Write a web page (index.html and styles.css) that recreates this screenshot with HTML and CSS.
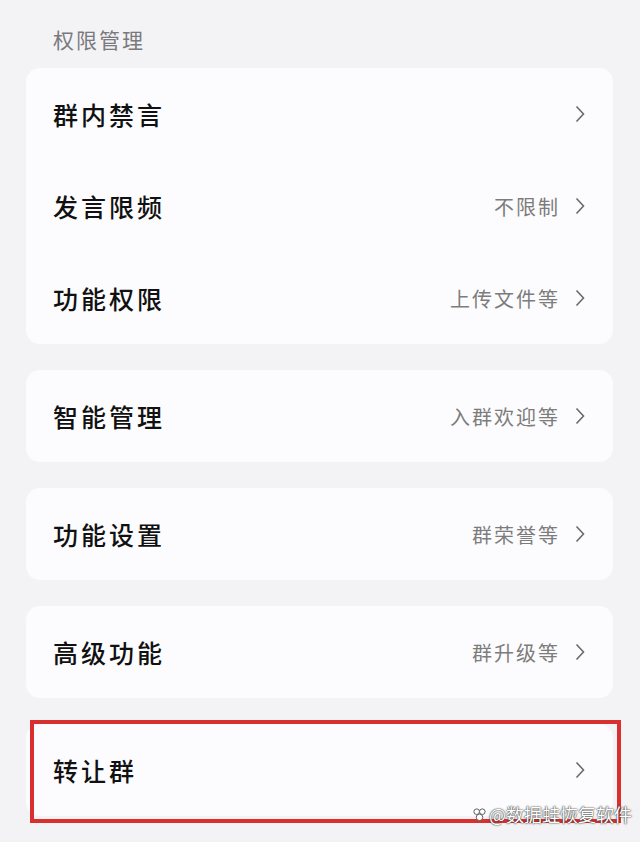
FILE: index.html
```html
<!DOCTYPE html>
<html lang="zh">
<head>
<meta charset="utf-8">
<link rel="stylesheet" href="styles.css">
</head>
<body>
<div class="page">
  <div class="section-title">权限管理</div>
  <div class="card">
    <div class="row"><span class="label">群内禁言</span><span class="right"><svg class="chev" viewBox="0 0 10 18"><path d="M1.5 1.5 L8.5 9 L1.5 16.5"/></svg></span></div>
    <div class="row"><span class="label">发言限频</span><span class="right"><span class="value">不限制</span><svg class="chev" viewBox="0 0 10 18"><path d="M1.5 1.5 L8.5 9 L1.5 16.5"/></svg></span></div>
    <div class="row"><span class="label">功能权限</span><span class="right"><span class="value">上传文件等</span><svg class="chev" viewBox="0 0 10 18"><path d="M1.5 1.5 L8.5 9 L1.5 16.5"/></svg></span></div>
  </div>
  <div class="card">
    <div class="row"><span class="label">智能管理</span><span class="right"><span class="value">入群欢迎等</span><svg class="chev" viewBox="0 0 10 18"><path d="M1.5 1.5 L8.5 9 L1.5 16.5"/></svg></span></div>
  </div>
  <div class="card">
    <div class="row"><span class="label">功能设置</span><span class="right"><span class="value">群荣誉等</span><svg class="chev" viewBox="0 0 10 18"><path d="M1.5 1.5 L8.5 9 L1.5 16.5"/></svg></span></div>
  </div>
  <div class="card">
    <div class="row"><span class="label">高级功能</span><span class="right"><span class="value">群升级等</span><svg class="chev" viewBox="0 0 10 18"><path d="M1.5 1.5 L8.5 9 L1.5 16.5"/></svg></span></div>
  </div>
  <div class="card card-last">
    <div class="row"><span class="label">转让群</span><span class="right"><svg class="chev" viewBox="0 0 10 18"><path d="M1.5 1.5 L8.5 9 L1.5 16.5"/></svg></span></div>
    <div class="highlight"></div>
  </div>
</div>
<div class="watermark"><svg class="wm-icon" viewBox="0 0 16 16"><circle cx="5" cy="5" r="3"/><circle cx="11" cy="5" r="3"/><circle cx="8" cy="11" r="3.5"/></svg><span>@数据蛙恢复软件</span></div>
</body>
</html>
```
FILE: styles.css
```css
html, body {
  margin: 0;
  padding: 0;
  background: #f3f3f6;
  font-family: "Noto Sans CJK SC", "Noto Sans", sans-serif;
}
.page {
  padding: 34px 27px 0 26px;
  display: flex;
  flex-direction: column;
  gap: 26px;
  position: relative;
  height: 808px;
  overflow: hidden;
}
.section-title {
  font-size: 21px;
  color: #7a7a7e;
  padding-left: 27px;
  line-height: 30px;
  margin-top: -10px;
  margin-bottom: -12px;
  letter-spacing: 2px;
}
.card {
  background: #fcfcfe;
  border-radius: 14px;
  position: relative;
}
.row {
  height: 92px;
  display: flex;
  align-items: center;
  justify-content: space-between;
  padding: 0 28px 0 27px;
}
.label {
  font-size: 25px;
  font-weight: 500;
  color: #111111;
  letter-spacing: 3px;
}
.right {
  display: flex;
  align-items: center;
  gap: 15px;
}
.value {
  font-size: 20px;
  color: #7c7c7c;
  letter-spacing: 2px;
}
.chev {
  width: 10px;
  height: 18px;
  fill: none;
  stroke: #6a6a6a;
  stroke-width: 1.6;
}
.card-last {
  margin-top: 0;
}
.highlight {
  position: absolute;
  left: 4px;
  right: -8px;
  top: -4px;
  bottom: -7px;
  border: 4px solid #d8302e;
}
.watermark {
  position: absolute;
  left: 472px;
  top: 801px;
  display: flex;
  align-items: center;
  gap: 2px;
  font-size: 18px;
  color: #ffffff;
  text-shadow: 0 0 2px #333, 0 0 1px #333;
  font-family: "Noto Sans CJK SC", sans-serif;
}
.wm-icon {
  width: 15px;
  height: 15px;
  fill: #fff;
  stroke: #555;
  stroke-width: 1;
}
```
